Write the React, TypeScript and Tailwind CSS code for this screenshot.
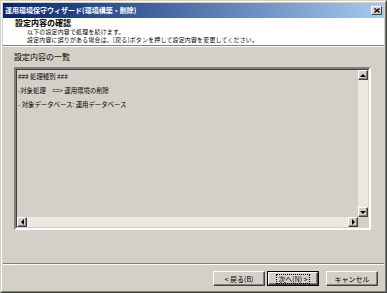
const font = { fontFamily: '"Noto Sans CJK JP", "Noto Sans", sans-serif' };

function Arrow({ dir }: { dir: "up" | "down" | "left" | "right" }) {
	const pts = {
		up: "1,4 4,1 7,4",
		down: "1,1 4,4 7,1",
		left: "4,1 1,4 4,7",
		right: "1,1 4,4 1,7",
	}[dir];
	const vertical = dir === "up" || dir === "down";
	return (
		<div className="flex h-full w-full items-center justify-center border border-t-white border-l-white border-r-[#404040] border-b-[#404040] bg-[#d4d0c8] shadow-[inset_-1px_-1px_0_#808080]">
			<svg
				width={vertical ? 8 : 5}
				height={vertical ? 5 : 8}
				viewBox={vertical ? "0 0 8 5" : "0 0 5 8"}
			>
				<polygon points={pts} fill="#000" />
			</svg>
		</div>
	);
}

function Button({
	label,
	primary,
}: {
	label: string;
	primary?: boolean;
}) {
	return (
		<div
			className={`h-[15px] w-[52px] ${primary ? "border border-black" : ""}`}
		>
			<div className="flex h-full w-full items-center justify-center border border-t-white border-l-white border-r-[#404040] border-b-[#404040] bg-[#d4d0c8] shadow-[inset_-1px_-1px_0_#808080]">
				<span
					className={`px-[1px] text-[7px] leading-[8px] text-black ${
						primary ? "outline outline-1 outline-dotted outline-black" : ""
					}`}
				>
					{label}
				</span>
			</div>
		</div>
	);
}

export default function App() {
	const lines = [
		"### 処理種別 ###",
		"-対象処理　==> 運用環境の削除",
		"- 対象データベース: 運用データベース",
	];

	return (
		<div
			style={font}
			className="h-[293px] w-[387px] overflow-hidden border border-t-[#d4d0c8] border-l-[#d4d0c8] border-r-[#404040] border-b-[#404040] bg-[#d4d0c8]"
		>
			<div className="flex h-full w-full flex-col border border-t-white border-l-white border-r-[#808080] border-b-[#808080] p-[1px]">
				{/* title bar */}
				<div className="flex h-[15px] shrink-0 items-center justify-between bg-gradient-to-r from-[#0a246a] to-[#a6caf0] pl-[2px] pr-[2px]">
					<span className="text-[7px] font-bold leading-none text-white">
						運用環境保守ウィザード(環境構築・削除)
					</span>
					<div className="flex h-[9px] w-[11px] items-center justify-center border border-t-white border-l-white border-r-[#404040] border-b-[#404040] bg-[#d4d0c8]">
						<svg width="6" height="5" viewBox="0 0 6 5">
							<path d="M0.5 0.5 L5.5 4.5 M5.5 0.5 L0.5 4.5" stroke="#000" strokeWidth="1.3" />
						</svg>
					</div>
				</div>

				{/* header */}
				<div className="flex h-[27px] shrink-0 flex-col bg-white pl-[12px]">
					<div className="text-[8px] font-bold leading-[10px] text-black">
						設定内容の確認
					</div>
					<div className="pl-[12px] text-[5.9px] leading-[8.4px] tracking-[0.25px] text-black">
						<div>以下の設定内容で処理を続けます。</div>
						<div>
							設定内容に誤りがある場合は、[戻る]ボタンを押して設定内容を変更してください。
						</div>
					</div>
				</div>
				<div className="h-[1px] shrink-0 bg-[#808080]" />
				<div className="h-[1px] shrink-0 bg-white" />

				{/* body */}
				<div className="flex flex-1 flex-col px-[11px] pt-[5px]">
					<div className="text-[8px] leading-[10px] text-black">設定内容の一覧</div>
					<div className="mt-[5px] flex h-[163px] w-[357px] border-2 border-t-[#808080] border-l-[#808080] border-r-white border-b-white">
						<div className="flex flex-1 border border-t-[#404040] border-l-[#404040] border-r-[#d4d0c8] border-b-[#d4d0c8]">
							<div className="flex flex-1 flex-col">
								<div className="flex flex-1">
									<div className="flex-1 pl-[1px] text-[6.4px] leading-[14px] text-black">
										{lines.map((l) => (
											<div key={l} className="whitespace-pre">
												{l}
											</div>
										))}
									</div>
									{/* vertical scrollbar */}
									<div className="flex w-[10px] flex-col bg-[#eae8e3]">
										<div className="h-[10px]">
											<Arrow dir="up" />
										</div>
										<div className="flex-1" />
										<div className="h-[10px]">
											<Arrow dir="down" />
										</div>
									</div>
								</div>
								{/* horizontal scrollbar */}
								<div className="flex h-[10px]">
									<div className="flex flex-1 bg-[#eae8e3]">
										<div className="w-[10px]">
											<Arrow dir="left" />
										</div>
										<div className="flex-1" />
										<div className="w-[10px]">
											<Arrow dir="right" />
										</div>
									</div>
									<div className="w-[10px] bg-[#d4d0c8]" />
								</div>
							</div>
						</div>
					</div>
				</div>

				{/* footer */}
				<div className="h-[1px] shrink-0 bg-[#808080]" />
				<div className="h-[1px] shrink-0 bg-white" />
				<div className="flex h-[25px] shrink-0 items-start justify-end pr-[6px] pt-[6px]">
					<Button label="< 戻る(B)" />
					<div className="w-[2px]" />
					<Button label="次へ(N) >" primary />
					<div className="w-[7px]" />
					<Button label="キャンセル" />
				</div>
			</div>
		</div>
	);
}
